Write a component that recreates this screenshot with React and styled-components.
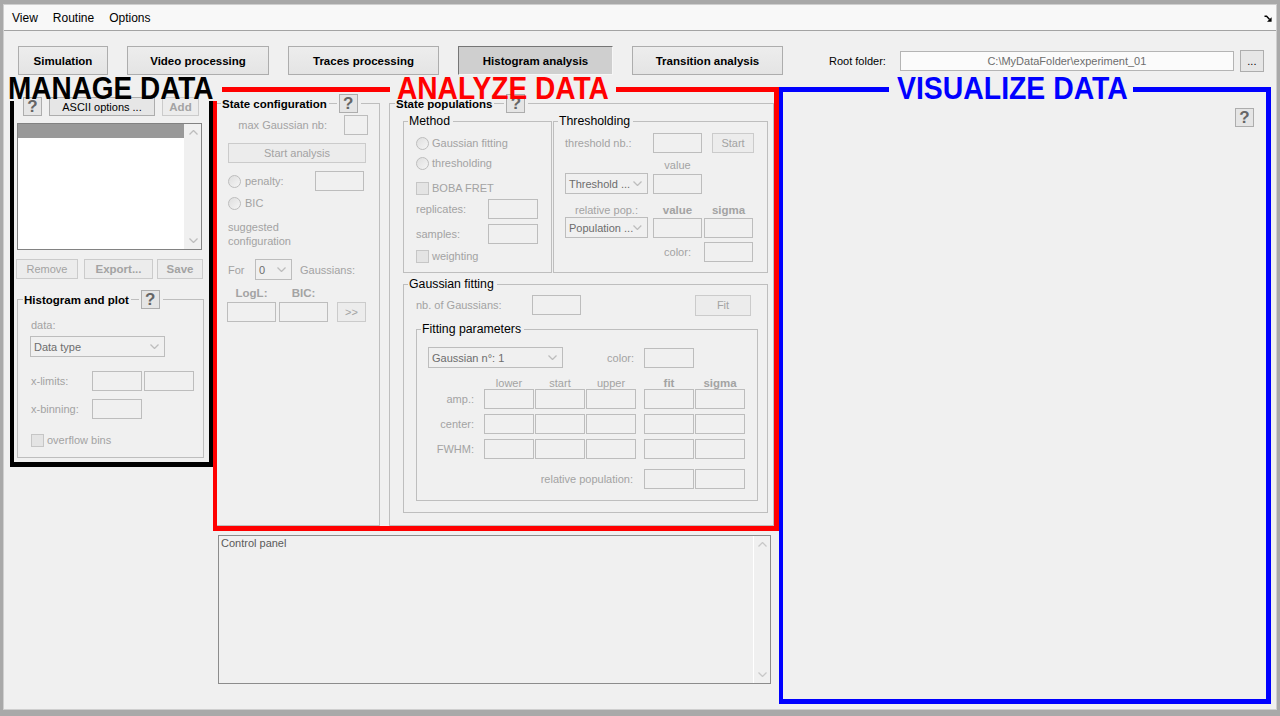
import React from 'react';
import styled, { createGlobalStyle } from 'styled-components';

// Global page reset
const GlobalStyle = createGlobalStyle`
  html, body { margin: 0; padding: 0; }
  body {
    background: #a9a9a9;
    font-family: "Liberation Sans", Arial, sans-serif;
    font-size: 11px;
    color: #000;
  }
  * { box-sizing: border-box; }
`;

const OFF = '#a3a3a3';

// Window chrome
const Page = styled.div`
  position: relative;
  width: 1280px;
  height: 716px;
  padding: 4px 0 0 3px;
  overflow: hidden;
`;

const Window = styled.div`
  width: 1274px;
  height: 706px;
  border: 1px solid #cfcfcf;
  background: #f0f0f0;
  display: flex;
  flex-direction: column;
`;

const MenuBar = styled.div`
  flex: none;
  height: 26px;
  display: flex;
  align-items: center;
  gap: 15px;
  padding: 1px 4px 0 8px;
  background: #f8f8f8;
  border-bottom: 1px solid #a3a3a3;
  font-size: 12px;
`;

const MenuItem = styled.span`
  color: #000;
`;

const Undock = styled.span`
  margin-left: auto;
  display: flex;
`;

// Tabs + root folder
const Toolbar = styled.div`
  flex: none;
  height: 29px;
  margin-top: 15px;
  padding-left: 14px;
  display: flex;
  align-items: center;
`;

const Tabs = styled.div`
  display: flex;
  gap: 19px;
`;

const Tab = styled.div`
  width: ${p => p.$w}px;
  height: 29px;
  display: flex;
  align-items: center;
  justify-content: center;
  font-weight: bold;
  font-size: 11.5px;
  border: 1px solid #adadad;
  border-color: ${p => p.$active ? '#767676 #f6f6f6 #f6f6f6 #767676' : '#adadad'};
  background: ${p => p.$active ? '#cfcfcf' : 'linear-gradient(#ededed, #e4e4e4)'};
`;

const RootLabel = styled.span`
  margin-left: 46px;
  font-size: 11px;
`;

const PathBox = styled.div`
  width: 334px;
  height: 20px;
  margin-left: 14px;
  display: flex;
  align-items: center;
  justify-content: center;
  border: 1px solid #b4b4b4;
  background: #fbfbfb;
  color: #6d6d6d;
`;

// Layout columns
const Body = styled.div`
  flex: 1;
  display: flex;
  align-items: flex-start;
`;

const LeftCol = styled.div`
  flex: none;
  width: 188px;
  margin: 22px 0 0 12px;
  display: flex;
  flex-direction: column;
`;

const MidCol = styled.div`
  flex: none;
  width: 559px;
  margin: 19px 0 0 11px;
  display: flex;
  flex-direction: column;
`;

const PanelRow = styled.div`
  display: flex;
  gap: 9px;
`;

const RightCol = styled.div`
  flex: 1;
  display: flex;
  justify-content: flex-end;
  padding: 33px 22px 0 0;
`;

// Controls
const Row = styled.div`
  flex: none;
  display: flex;
  align-items: center;
  height: ${p => (p.$h ? `${p.$h}px` : 'auto')};
  margin-top: ${p => p.$mt || 0}px;
  margin-left: ${p => p.$ml || 0}px;
`;

const Label = styled.span`
  flex: none;
  width: ${p => (p.$w ? `${p.$w}px` : 'auto')};
  margin-left: ${p => p.$ml || 0}px;
  text-align: ${p => p.$align || 'left'};
  color: ${p => (p.$dark ? '#000' : OFF)};
  font-weight: ${p => (p.$bold ? 'bold' : 'normal')};
  font-size: ${p => (p.$bold ? '11.5px' : '11px')};
  line-height: 14px;
  white-space: nowrap;
`;

const Btn = styled.div`
  flex: none;
  width: ${p => p.$w}px;
  height: ${p => p.$h || 20}px;
  margin-left: ${p => p.$ml || 0}px;
  display: flex;
  align-items: center;
  justify-content: center;
  border: 1px solid ${p => (p.$off ? '#cbcbcb' : '#adadad')};
  background: ${p => (p.$off ? '#ececec' : '#e6e6e6')};
  color: ${p => (p.$off ? OFF : '#000')};
  font-weight: ${p => (p.$bold ? 'bold' : 'normal')};
  font-size: ${p => (p.$bold ? '11.5px' : '11px')};
  white-space: nowrap;
`;

const Help = styled.div`
  flex: none;
  width: 19px;
  height: 19px;
  margin-left: ${p => p.$ml || 0}px;
  display: flex;
  align-items: center;
  justify-content: center;
  border: 1px solid #adadad;
  background: #e5e5e5;
  color: #666;
  font-weight: bold;
  font-size: 17px;
  line-height: 1;
`;

const Edit = styled.div`
  flex: none;
  width: ${p => p.$w || 49}px;
  height: 20px;
  margin-left: ${p => p.$ml || 0}px;
  border: 1px solid #bdbdbd;
  background: #f0f0f0;
`;

const Drop = styled.div`
  flex: none;
  width: ${p => p.$w}px;
  height: 21px;
  margin-left: ${p => p.$ml || 0}px;
  display: flex;
  align-items: center;
  justify-content: space-between;
  padding: 0 5px 0 3px;
  border: 1px solid #bdbdbd;
  background: #f0f0f0;
  color: #6d6d6d;
  white-space: nowrap;
  overflow: hidden;
`;

const Radio = styled.span`
  flex: none;
  width: 13px;
  height: 13px;
  margin-left: ${p => p.$ml || 0}px;
  border-radius: 50%;
  border: 1px solid #bdbdbd;
  background: linear-gradient(135deg, #dedede, #f5f5f5);
`;

const Check = styled.span`
  flex: none;
  width: 13px;
  height: 13px;
  margin-left: ${p => p.$ml || 0}px;
  border: 1px solid #c6c6c6;
  background: #e4e4e4;
`;

const Note = styled.div`
  margin: 10px 0 0 12px;
  color: ${OFF};
  line-height: 14px;
`;

// Group frames
const Frame = styled.fieldset`
  flex: none;
  min-width: 0;
  width: ${p => p.$w}px;
  height: ${p => p.$h}px;
  margin: ${p => p.$mt || 0}px 0 0 ${p => p.$ml || 0}px;
  padding: 0;
  border: 1px solid #bebebe;
  display: flex;
  flex-direction: column;
`;

const Legend = styled.legend`
  display: flex;
  align-items: center;
  height: ${p => p.$h || 14}px;
  margin-left: ${p => p.$ml ?? 5}px;
  padding: 0 3px 0 1px;
`;

const Title = styled.span`
  font-weight: bold;
  font-size: 11.5px;
  white-space: nowrap;
`;

const GroupTitle = styled.span`
  font-size: 12.3px;
  line-height: 14px;
  white-space: nowrap;
`;

const Dash = styled.span`
  width: ${p => p.$w || 8}px;
  height: 1px;
  margin: 0 2px;
  background: #bebebe;
`;

// List box and console
const ListBox = styled.div`
  flex: none;
  display: flex;
  width: 185px;
  height: 127px;
  margin: 7px 0 0 1px;
  border: 1px solid #828282;
  background: #fff;
`;

const ListBody = styled.div`
  flex: 1;
`;

const ListSel = styled.div`
  height: 14px;
  background: #999;
`;

const Scroll = styled.div`
  flex: none;
  width: 17px;
  background: #f0f0f0;
  border-left: 1px solid ${p => p.$sep || '#f0f0f0'};
  display: flex;
  flex-direction: column;
  justify-content: space-between;
  align-items: center;
  padding: 6px 0;
`;

const Console = styled.div`
  flex: none;
  display: flex;
  width: 553px;
  height: 149px;
  margin: 9px 0 0 3px;
  border: 1px solid #8c8c8c;
  background: #f0f0f0;
`;

const ConsoleText = styled.div`
  flex: 1;
  padding: 0 2px;
  color: #5a5a5a;
  line-height: 14px;
`;

// Annotation layer drawn on top of the screenshot
const Overlay = styled.div`
  position: absolute;
  inset: 0;
  pointer-events: none;
`;

const Stroke = styled.div`
  position: absolute;
  left: ${p => p.$x}px;
  top: ${p => p.$y}px;
  width: ${p => p.$w}px;
  height: ${p => p.$h}px;
  background: ${p => p.$c};
`;

const AnnotLabel = styled.div`
  position: absolute;
  left: ${p => p.$x}px;
  top: 73px;
  font-family: "Liberation Sans", Arial, sans-serif;
  font-weight: bold;
  font-size: 31px;
  line-height: 31px;
  color: ${p => p.$c};
  transform: scaleX(${p => p.$sx});
  transform-origin: 0 0;
  white-space: nowrap;
`;

const Chev = ({ up, color = '#bdbdbd' }) => (
  <svg width="9" height="5" viewBox="0 0 9 5">
    <polyline
      points={up ? '0.5,4.5 4.5,0.5 8.5,4.5' : '0.5,0.5 4.5,4.5 8.5,0.5'}
      fill="none"
      stroke={color}
      strokeWidth="1.3"
    />
  </svg>
);

const TABS = [
  { label: 'Simulation', w: 90 },
  { label: 'Video processing', w: 142 },
  { label: 'Traces processing', w: 151 },
  { label: 'Histogram analysis', w: 155, active: true },
  { label: 'Transition analysis', w: 151 },
];

const PARAMS = ['amp.:', 'center:', 'FWHM:'];

const STROKES = [
  // manage data
  { x: 10, y: 101, w: 4, h: 366, c: '#000' },
  { x: 209, y: 101, w: 4, h: 366, c: '#000' },
  { x: 10, y: 462, w: 203, h: 5, c: '#000' },
  // analyze data
  { x: 222, y: 87, w: 168, h: 5, c: '#f00' },
  { x: 616, y: 87, w: 163, h: 5, c: '#f00' },
  { x: 213, y: 101, w: 4, h: 430, c: '#f00' },
  { x: 774, y: 87, w: 5, h: 444, c: '#f00' },
  { x: 213, y: 526, w: 566, h: 5, c: '#f00' },
  // visualize data
  { x: 779, y: 87, w: 110, h: 5, c: '#00f' },
  { x: 1133, y: 87, w: 138, h: 5, c: '#00f' },
  { x: 779, y: 87, w: 4, h: 617, c: '#00f' },
  { x: 1266, y: 87, w: 5, h: 617, c: '#00f' },
  { x: 779, y: 699, w: 492, h: 5, c: '#00f' },
];

export default function App() {
  return (
    <>
      <GlobalStyle />
      <Page>
        <Window>
          <MenuBar>
            <MenuItem>View</MenuItem>
            <MenuItem>Routine</MenuItem>
            <MenuItem>Options</MenuItem>
            <Undock>
              <svg width="8" height="7" viewBox="0 0 8 7">
                <path d="M0.5 1.2 H2.6 L5.6 4.4" stroke="#000" strokeWidth="1.4" fill="none" />
                <path d="M7.6 2.2 V6.8 H3 Z" fill="#000" />
              </svg>
            </Undock>
          </MenuBar>

          <Toolbar>
            <Tabs>
              {TABS.map(t => (
                <Tab key={t.label} $w={t.w} $active={t.active}>{t.label}</Tab>
              ))}
            </Tabs>
            <RootLabel>Root folder:</RootLabel>
            <PathBox>{'C:\\MyDataFolder\\experiment_01'}</PathBox>
            <Btn $w={24} $h={22} $ml={6}>...</Btn>
          </Toolbar>

          <Body>
            {/* Manage data */}
            <LeftCol>
              <Row $h={19} $ml={7}>
                <Help>?</Help>
                <Btn $w={106} $h={19} $ml={7}>ASCII options ...</Btn>
                <Btn $w={37} $h={19} $ml={7} $off $bold>Add</Btn>
              </Row>
              <ListBox>
                <ListBody><ListSel /></ListBody>
                <Scroll><Chev up /><Chev /></Scroll>
              </ListBox>
              <Row $h={20} $mt={9}>
                <Btn $w={62} $off>Remove</Btn>
                <Btn $w={69} $ml={6} $off $bold>Export...</Btn>
                <Btn $w={46} $ml={4} $off $bold>Save</Btn>
              </Row>
              <Frame $w={187} $h={168} $mt={11} $ml={1}>
                <Legend $h={19}>
                  <Title>Histogram and plot</Title>
                  <Dash />
                  <Help>?</Help>
                </Legend>
                <Row $h={14} $mt={9}><Label $ml={13}>data:</Label></Row>
                <Row $h={21} $mt={4}>
                  <Drop $ml={12} $w={135}>Data type<Chev /></Drop>
                </Row>
                <Row $h={20} $mt={14}>
                  <Label $ml={13} $w={61}>x-limits:</Label>
                  <Edit $w={50} />
                  <Edit $w={50} $ml={2} />
                </Row>
                <Row $h={20} $mt={8}>
                  <Label $ml={13} $w={61}>x-binning:</Label>
                  <Edit $w={50} />
                </Row>
                <Row $h={14} $mt={14}>
                  <Check $ml={13} />
                  <Label $ml={3}>overflow bins</Label>
                </Row>
              </Frame>
            </LeftCol>

            {/* Analyze data */}
            <MidCol>
              <PanelRow>
                <Frame $w={165} $h={432}>
                  <Legend $h={19}>
                    <Title>State configuration</Title>
                    <Dash />
                    <Help>?</Help>
                  </Legend>
                  <Row $h={20} $mt={2}>
                    <Label $w={111} $align="right">max Gaussian nb:</Label>
                    <Edit $w={24} $ml={17} />
                  </Row>
                  <Row $h={20} $mt={8}>
                    <Btn $w={138} $ml={12} $off>Start analysis</Btn>
                  </Row>
                  <Row $h={20} $mt={8}>
                    <Radio $ml={12} />
                    <Label $ml={4} $w={70}>penalty:</Label>
                    <Edit $w={49} />
                  </Row>
                  <Row $h={14} $mt={5}>
                    <Radio $ml={12} />
                    <Label $ml={4}>BIC</Label>
                  </Row>
                  <Note>suggested<br />configuration</Note>
                  <Row $h={21} $mt={11}>
                    <Label $ml={12} $w={27}>For</Label>
                    <Drop $w={37}>0<Chev /></Drop>
                    <Label $ml={8}>Gaussians:</Label>
                  </Row>
                  <Row $h={14} $mt={6}>
                    <Label $ml={11} $w={49} $align="center" $bold>LogL:</Label>
                    <Label $ml={3} $w={49} $align="center" $bold>BIC:</Label>
                  </Row>
                  <Row $h={20} $mt={2}>
                    <Edit $ml={11} $w={49} />
                    <Edit $ml={3} $w={49} />
                    <Btn $w={29} $ml={9} $off>&gt;&gt;</Btn>
                  </Row>
                </Frame>

                <Frame $w={385} $h={432}>
                  <Legend $h={19}>
                    <Title>State populations</Title>
                    <Dash $w={10} />
                    <Help>?</Help>
                  </Legend>
                  <Row $mt={1} $ml={13}>
                    <Frame $w={149} $h={159}>
                      <Legend $ml={4}><GroupTitle>Method</GroupTitle></Legend>
                      <Row $h={14} $mt={8}>
                        <Radio $ml={12} />
                        <Label $ml={3}>Gaussian fitting</Label>
                      </Row>
                      <Row $h={14} $mt={6}>
                        <Radio $ml={12} />
                        <Label $ml={3}>thresholding</Label>
                      </Row>
                      <Row $h={14} $mt={11}>
                        <Check $ml={12} />
                        <Label $ml={3}>BOBA FRET</Label>
                      </Row>
                      <Row $h={20} $mt={4}>
                        <Label $ml={12} $w={72}>replicates:</Label>
                        <Edit $w={50} />
                      </Row>
                      <Row $h={20} $mt={5}>
                        <Label $ml={12} $w={72}>samples:</Label>
                        <Edit $w={50} />
                      </Row>
                      <Row $h={14} $mt={5}>
                        <Check $ml={12} />
                        <Label $ml={3}>weighting</Label>
                      </Row>
                    </Frame>

                    <Frame $w={215} $h={159} $ml={1}>
                      <Legend $ml={4}><GroupTitle>Thresholding</GroupTitle></Legend>
                      <Row $h={20} $mt={5}>
                        <Label $ml={11} $w={88}>threshold nb.:</Label>
                        <Edit $w={49} />
                        <Btn $w={42} $ml={10} $off>Start</Btn>
                      </Row>
                      <Row $h={14} $mt={5}>
                        <Label $ml={99} $w={49} $align="center">value</Label>
                      </Row>
                      <Row $h={21} $mt={1}>
                        <Drop $ml={11} $w={83}>Threshold ...<Chev /></Drop>
                        <Edit $ml={5} $w={49} />
                      </Row>
                      <Row $h={14} $mt={9}>
                        <Label $ml={11} $w={83} $align="center">relative pop.:</Label>
                        <Label $ml={5} $w={49} $align="center" $bold>value</Label>
                        <Label $ml={2} $w={49} $align="center" $bold>sigma</Label>
                      </Row>
                      <Row $h={21}>
                        <Drop $ml={11} $w={83}>Population ...<Chev /></Drop>
                        <Edit $ml={5} $w={49} />
                        <Edit $ml={2} $w={49} />
                      </Row>
                      <Row $h={20} $mt={4}>
                        <Label $ml={99} $w={49} $align="center">color:</Label>
                        <Edit $ml={2} $w={49} />
                      </Row>
                    </Frame>
                  </Row>

                  <Frame $w={365} $h={236} $mt={4} $ml={13}>
                    <Legend $ml={4}><GroupTitle>Gaussian fitting</GroupTitle></Legend>
                    <Row $h={22} $mt={3}>
                      <Label $ml={12} $w={116}>nb. of Gaussians:</Label>
                      <Edit $w={49} />
                      <Btn $w={56} $h={21} $ml={114} $off>Fit</Btn>
                    </Row>
                    <Frame $w={342} $h={179} $mt={6} $ml={12}>
                      <Legend $ml={4}><GroupTitle>Fitting parameters</GroupTitle></Legend>
                      <Row $h={21} $mt={11}>
                        <Drop $ml={11} $w={135}>Gaussian n°: 1<Chev /></Drop>
                        <Label $w={71} $align="right">color:</Label>
                        <Edit $ml={10} $w={50} />
                      </Row>
                      <Row $h={13} $mt={8}>
                        <Label $ml={67} $w={50} $align="center">lower</Label>
                        <Label $ml={1} $w={50} $align="center">start</Label>
                        <Label $ml={1} $w={50} $align="center">upper</Label>
                        <Label $ml={8} $w={50} $align="center" $bold>fit</Label>
                        <Label $ml={1} $w={50} $align="center" $bold>sigma</Label>
                      </Row>
                      {PARAMS.map((p, i) => (
                        <Row key={p} $h={20} $mt={i === 0 ? 0 : 5}>
                          <Label $w={57} $align="right">{p}</Label>
                          <Edit $ml={10} $w={50} />
                          <Edit $ml={1} $w={50} />
                          <Edit $ml={1} $w={50} />
                          <Edit $ml={8} $w={50} />
                          <Edit $ml={1} $w={50} />
                        </Row>
                      ))}
                      <Row $h={20} $mt={10}>
                        <Label $w={216} $align="right">relative population:</Label>
                        <Edit $ml={11} $w={50} />
                        <Edit $ml={1} $w={50} />
                      </Row>
                    </Frame>
                  </Frame>
                </Frame>
              </PanelRow>

              <Console>
                <ConsoleText>Control panel</ConsoleText>
                <Scroll $sep="#fff"><Chev up color="#c8c8c8" /><Chev color="#c8c8c8" /></Scroll>
              </Console>
            </MidCol>

            {/* Visualize data */}
            <RightCol>
              <Help>?</Help>
            </RightCol>
          </Body>
        </Window>

        <Overlay>
          {STROKES.map((s, i) => (
            <Stroke key={i} $x={s.x} $y={s.y} $w={s.w} $h={s.h} $c={s.c} />
          ))}
          <AnnotLabel $x={8} $c="#000" $sx={0.902}>MANAGE DATA</AnnotLabel>
          <AnnotLabel $x={397} $c="#f00" $sx={0.907}>ANALYZE DATA</AnnotLabel>
          <AnnotLabel $x={897} $c="#00f" $sx={0.916}>VISUALIZE DATA</AnnotLabel>
        </Overlay>
      </Page>
    </>
  );
}
